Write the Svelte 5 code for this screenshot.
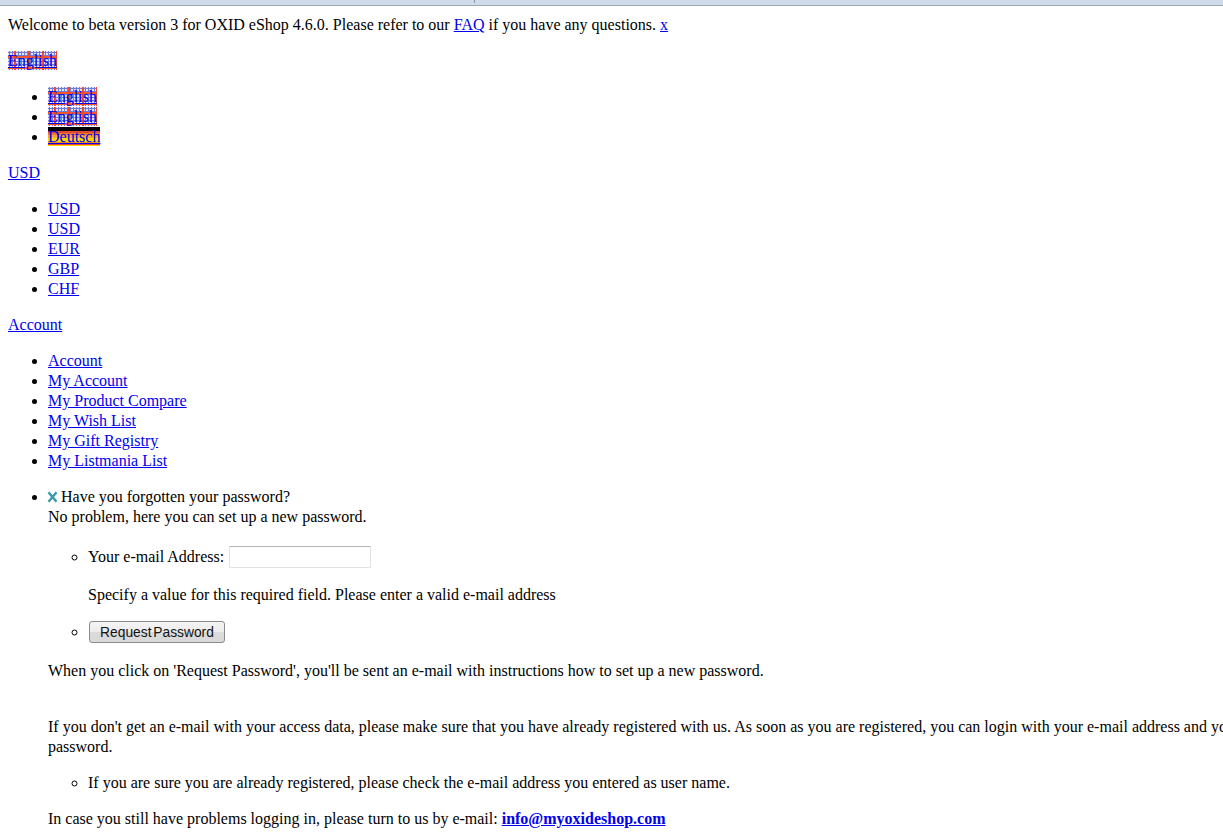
<script>
  const langs = [
    { label: 'English', cls: 'gb' },
    { label: 'English', cls: 'gb' },
    { label: 'Deutsch', cls: 'de' }
  ];
  const currencies = ['USD', 'USD', 'EUR', 'GBP', 'CHF'];
  const account = ['Account', 'My Account', 'My Product Compare', 'My Wish List', 'My Gift Registry', 'My Listmania List'];
</script>

<div class="chrome"><span class="tick"></span></div>
<main class="page">
  <p>Welcome to beta version 3 for OXID eShop 4.6.0. Please refer to our <a href="#faq">FAQ</a> if you have any questions. <a href="#x">x</a></p>
  <p><a href="#en" class="gb">English</a></p>
  <ul>
    {#each langs as lang}
      <li><a href="#l" class={lang.cls}>{lang.label}</a></li>
    {/each}
  </ul>
  <p><a href="#usd">USD</a></p>
  <ul>
    {#each currencies as c}
      <li><a href="#c">{c}</a></li>
    {/each}
  </ul>
  <p><a href="#account">Account</a></p>
  <ul>
    {#each account as item}
      <li><a href="#a">{item}</a></li>
    {/each}
  </ul>
  <ul>
    <li>
      <div class="heading">
        <svg class="close" width="12" height="12" viewBox="0 0 12 12" aria-hidden="true"><path d="M1.5 1.3 L9.5 10.7 M9.5 1.3 L1.5 10.7" stroke="#3a9bae" stroke-width="2.5" fill="none"/></svg>Have you forgotten your password?
      </div>
      <div>No problem, here you can set up a new password.</div>
      <ul class="sub form">
        <li>
          <label class="row" for="mail">Your e-mail Address: <input id="mail" type="text" /></label>
          <p class="hint">Specify a value for this required field. Please enter a valid e-mail address</p>
        </li>
        <li><button type="button">Request Password</button></li>
      </ul>
      <p class="after">When you click on 'Request Password', you'll be sent an e-mail with instructions how to set up a new password.</p>
      <p class="wide">If you don't get an e-mail with your access data, please make sure that you have already registered with us. As soon as you are registered, you can login with your e-mail address and your password.</p>
      <ul class="sub">
        <li>If you are sure you are already registered, please check the e-mail address you entered as user name.</li>
      </ul>
      <p>In case you still have problems logging in, please turn to us by e-mail: <a href="#mail"><strong>info@myoxideshop.com</strong></a></p>
    </li>
  </ul>
</main>

<style>
  :global(body) {
    margin: 0;
    background: #fff;
    overflow: hidden;
  }
  .chrome {
    height: 5px;
    background: #cfdaeb;
    border-bottom: 1px solid #a0a4ad;
    position: relative;
  }
  .tick {
    position: absolute;
    left: 474px;
    top: 0;
    width: 1px;
    height: 3px;
    background: #8a93a3;
  }
  .page {
    padding: 9px 0 0 8px;
    width: 1300px;
    height: 832px;
    box-sizing: border-box;
    overflow: hidden;
    font: 16px/20px "Liberation Serif", "Times New Roman", serif;
    color: #000;
  }
  p {
    margin: 16px 0;
  }
  .page > p:first-child {
    margin-top: 0;
  }
  ul {
    margin: 16px 0;
    padding: 0 0 0 40px;
    list-style: disc;
  }
  ul.sub {
    list-style: circle;
    margin: 0 0 16px;
  }
  ul.form {
    margin: 19px 0 0;
  }
  a {
    color: #00e;
    text-decoration: underline;
  }
  .gb {
    display: inline-block;
    height: 19px;
    vertical-align: top;
    background-color: #e2e4f6;
    background-image:
      repeating-linear-gradient(90deg, transparent 0 6px, #f5452a 6px 8px, transparent 8px 14px),
      repeating-linear-gradient(180deg, transparent 0 5px, #f5552a 5px 7px, transparent 7px 11px),
      radial-gradient(circle at 1.5px 1.5px, #6f7cd6 0 1px, transparent 1.4px);
    background-size: auto, auto, 3px 3px;
  }
  .de {
    display: inline-block;
    height: 19px;
    vertical-align: top;
    color: #00e;
    background: linear-gradient(#000 0 4px, #e04a30 4px 6px, #f0732a 6px 8px, #f8a828 8px 11px, #ffd800 11px 15px, #ef8a25 15px 17px, #e8402a 17px 18px, #ffd800 18px 19px);
  }
  .heading {
    display: block;
  }
  .close {
    margin: 0 2px 0 -1px;
    vertical-align: -1px;
  }
  .row {
    display: block;
    height: 20px;
  }
  input {
    box-sizing: border-box;
    width: 142px;
    height: 22px;
    padding: 1px 2px;
    border: 1px solid #dfe3e8;
    border-top-color: #b5b5b8;
    border-radius: 1px;
    background: #fff;
    vertical-align: baseline;
    font: 13px "Liberation Sans", Arial, sans-serif;
    margin: 0 0 0 1px;
  }
  .hint {
    margin: 19px 0 16px;
  }
  button {
    box-sizing: border-box;
    width: 136px;
    height: 22px;
    padding: 0;
    margin: 0 0 0 1px;
    border: 1px solid #8b8b8b;
    border-radius: 3px;
    background: linear-gradient(#f4f4f4, #ececec 50%, #dcdcdc 51%, #d8d8d8);
    font: 13.8px "Liberation Sans", Arial, sans-serif;
    word-spacing: -2px;
    color: #111;
  }
  .after {
    margin: 18px 0 36px;
  }
  .wide {
    margin: 0 0 16px;
  }
</style>
